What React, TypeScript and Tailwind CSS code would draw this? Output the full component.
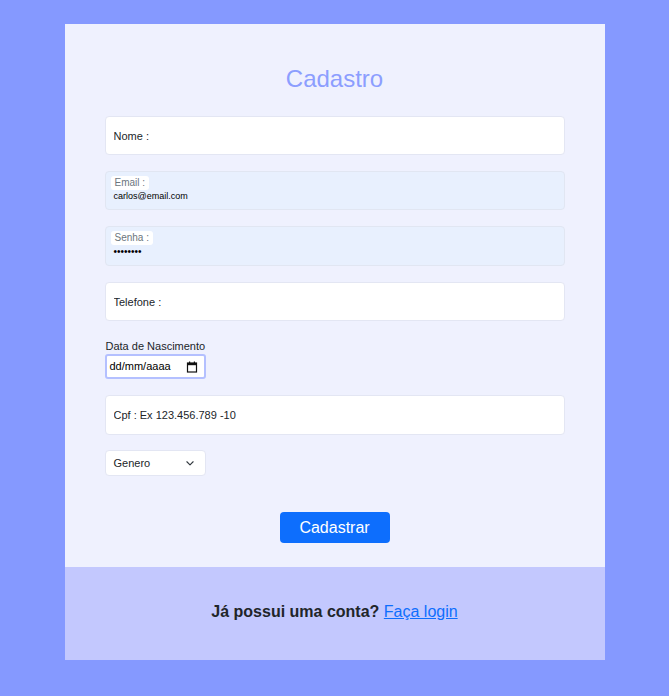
import React from "react";

const field =
  "w-full rounded-[4px] border border-[#E3E6F3] bg-white px-[8px] text-[11px] text-[#212529] placeholder:text-[#212529] outline-none";

const CalendarIcon = () => (
  <svg width="12" height="12" viewBox="0 0 12 12" aria-hidden>
    <rect x="1.5" y="2" width="9" height="9" fill="none" stroke="#111" strokeWidth="1.2" />
    <rect x="1.5" y="2" width="9" height="2.2" fill="#111" />
    <rect x="3" y="0.5" width="1.2" height="2" fill="#111" />
    <rect x="7.8" y="0.5" width="1.2" height="2" fill="#111" />
  </svg>
);

const Chevron = () => (
  <svg width="10" height="10" viewBox="0 0 16 16" aria-hidden>
    <path d="M3 6l5 5 5-5" fill="none" stroke="#343a40" strokeWidth="1.8" strokeLinecap="round" strokeLinejoin="round" />
  </svg>
);

export default function App() {
  return (
    <div className="min-h-[696px] bg-[#8599FF] pt-[24px] pb-[36px] font-['Liberation_Sans',Arial,sans-serif]">
      <div className="mx-auto w-[540px] bg-[#EFF1FE]">
        <div className="px-[40px] pt-[41px]">
          <h1 className="text-center text-[24px] leading-[28px] text-[#8C9EFF]">Cadastro</h1>

          <input className={`${field} mt-[23px] h-[39px]`} placeholder="Nome :" />

          {/* campos preenchidos (autofill) */}
          <div className="mt-[16px] h-[39px] rounded-[4px] border border-[#E1E6F2] bg-[#E8F0FE] px-[5px] pt-[4px]">
            <div className="w-fit rounded-[3px] bg-white px-[4px] text-[10px] leading-[14px] text-[#6c757d]">Email :</div>
            <div className="pl-[3px] text-[9px] leading-[13px] text-black">carlos@email.com</div>
          </div>
          <div className="mt-[16px] h-[40px] rounded-[4px] border border-[#E1E6F2] bg-[#E8F0FE] px-[5px] pt-[4px]">
            <div className="w-fit rounded-[3px] bg-white px-[4px] text-[10px] leading-[14px] text-[#6c757d]">Senha :</div>
            <div className="pl-[3px] text-[10px] leading-[13px] text-black">••••••••</div>
          </div>

          <input className={`${field} mt-[16px] h-[39px]`} placeholder="Telefone :" />

          <div className="mt-[17px] pl-[1px] text-[11px] leading-[16px] text-[#212529]">Data de Nascimento</div>
          <div className="flex h-[25px] w-[101px] items-center justify-between rounded-[3px] border-2 border-[#B4C0FF] bg-white pl-[3px] pr-[6px] text-[11px] text-black">
            <span>dd/mm/aaaa</span>
            <CalendarIcon />
          </div>

          <input className={`${field} mt-[16px] h-[40px]`} placeholder="Cpf : Ex 123.456.789 -10" />

          <div className="mt-[15px] flex h-[26px] w-[101px] items-center justify-between rounded-[4px] border border-[#E3E6F3] bg-white pl-[8px] pr-[10px] text-[11px] text-[#212529]">
            <span>Genero</span>
            <Chevron />
          </div>

          <div className="flex justify-center pt-[36px] pb-[24px]">
            <button className="h-[31px] w-[110px] rounded-[4px] bg-[#0D6EFD] text-[16px] text-white">Cadastrar</button>
          </div>
        </div>

        <div className="flex h-[93px] items-center justify-center bg-[#C3C8FE] pb-[4px] text-[16px]">
          <p className="font-bold text-[#212529]">
            Já possui uma conta?{" "}
            <a href="#" className="font-normal text-[#0D6EFD] underline">Faça login</a>
          </p>
        </div>
      </div>
    </div>
  );
}
